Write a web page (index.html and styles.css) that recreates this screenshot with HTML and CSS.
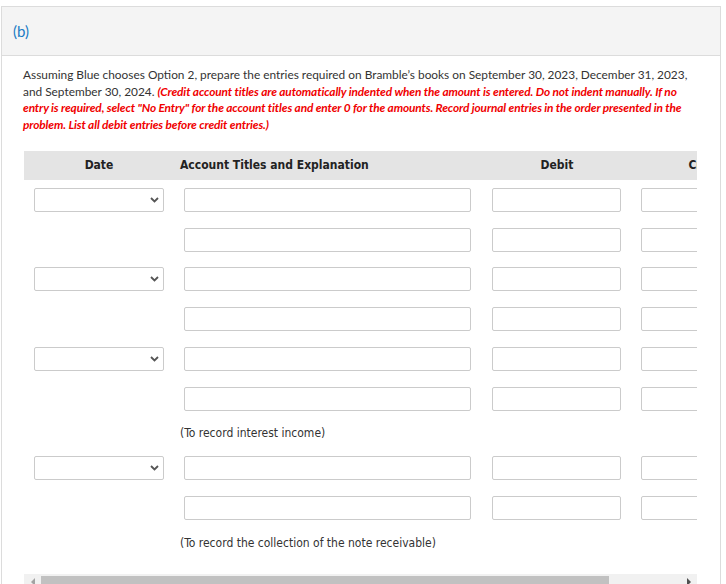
FILE: index.html
```html
<!DOCTYPE html>
<html>
<head>
<meta charset="utf-8">
<link rel="stylesheet" href="styles.css">
</head>
<body>
<div class="panel">
  <div class="panel-head"><span class="part">(b)</span></div>
  <div class="panel-body">
    <p class="prompt">Assuming Blue chooses Option 2, prepare the entries required on Bramble’s books on September 30, 2023, December 31, 2023, and September 30, 2024. <em class="warn">(Credit account titles are automatically indented when the amount is entered. Do not indent manually. If no entry is required, select "No Entry" for the account titles and enter 0 for the amounts. Record journal entries in the order presented in the problem. List all debit entries before credit entries.)</em></p>
    <div class="journal">
      <div class="journal-clip">
        <div class="jgrid">
          <div class="jhead c-date">Date</div>
          <div class="jhead c-acct">Account Titles and Explanation</div>
          <div class="jhead c-amt">Debit</div>
          <div class="jhead c-amt">Credit</div>

          <div class="cell c-date"><div class="sel"><svg class="chev" width="9" height="6" viewBox="0 0 9 6"><path d="M1 1l3.5 3.5L8 1" fill="none" stroke="#555" stroke-width="1.8"/></svg></div></div>
          <div class="cell c-acct-in"><div class="inp"></div></div>
          <div class="cell c-amt-in"><div class="inp"></div></div>
          <div class="cell c-cr-in"><div class="inp"></div></div>

          <div class="cell c-date"></div>
          <div class="cell c-acct-in"><div class="inp"></div></div>
          <div class="cell c-amt-in"><div class="inp"></div></div>
          <div class="cell c-cr-in"><div class="inp"></div></div>

          <div class="cell c-date"><div class="sel"><svg class="chev" width="9" height="6" viewBox="0 0 9 6"><path d="M1 1l3.5 3.5L8 1" fill="none" stroke="#555" stroke-width="1.8"/></svg></div></div>
          <div class="cell c-acct-in"><div class="inp"></div></div>
          <div class="cell c-amt-in"><div class="inp"></div></div>
          <div class="cell c-cr-in"><div class="inp"></div></div>

          <div class="cell c-date"></div>
          <div class="cell c-acct-in"><div class="inp"></div></div>
          <div class="cell c-amt-in"><div class="inp"></div></div>
          <div class="cell c-cr-in"><div class="inp"></div></div>

          <div class="cell c-date"><div class="sel"><svg class="chev" width="9" height="6" viewBox="0 0 9 6"><path d="M1 1l3.5 3.5L8 1" fill="none" stroke="#555" stroke-width="1.8"/></svg></div></div>
          <div class="cell c-acct-in"><div class="inp"></div></div>
          <div class="cell c-amt-in"><div class="inp"></div></div>
          <div class="cell c-cr-in"><div class="inp"></div></div>

          <div class="cell c-date"></div>
          <div class="cell c-acct-in"><div class="inp"></div></div>
          <div class="cell c-amt-in"><div class="inp"></div></div>
          <div class="cell c-cr-in"><div class="inp"></div></div>

          <div class="note-gap"></div>
          <div class="note">(To record interest income)</div>

          <div class="cell c-date"><div class="sel"><svg class="chev" width="9" height="6" viewBox="0 0 9 6"><path d="M1 1l3.5 3.5L8 1" fill="none" stroke="#555" stroke-width="1.8"/></svg></div></div>
          <div class="cell c-acct-in"><div class="inp"></div></div>
          <div class="cell c-amt-in"><div class="inp"></div></div>
          <div class="cell c-cr-in"><div class="inp"></div></div>

          <div class="cell c-date"></div>
          <div class="cell c-acct-in"><div class="inp"></div></div>
          <div class="cell c-amt-in"><div class="inp"></div></div>
          <div class="cell c-cr-in"><div class="inp"></div></div>

          <div class="note-gap"></div>
          <div class="note">(To record the collection of the note receivable)</div>
        </div>
      </div>
      <div class="hscroll">
        <div class="sb-btn"><span class="tri-left"></span></div>
        <div class="sb-track"><div class="sb-thumb"></div></div>
        <div class="sb-btn"><span class="tri-right"></span></div>
      </div>
    </div>
  </div>
</div>
</body>
</html>
```

FILE: styles.css
```css
html, body {
  margin: 0;
  padding: 0;
  background: #fff;
}
body {
  width: 726px;
  height: 584px;
  overflow: hidden;
}
.panel {
  margin: 6px 0 0 1px;
  width: 718px;
  border: 1px solid #dcdcdc;
  border-bottom: none;
  height: 600px;
}
.panel-head {
  height: 48px;
  background: #f4f4f4;
  border-bottom: 1px solid #dcdcdc;
  display: flex;
  align-items: center;
  padding-left: 11px;
}
.part {
  font-family: Lato, "Liberation Sans", sans-serif;
  font-size: 15px;
  color: #1b7cc5;
  font-weight: 400;
}
.panel-body {
  padding: 11px 22px 0 21px;
}
.prompt {
  margin: 0;
  font-family: Lato, "Liberation Sans", sans-serif;
  font-size: 11.86px;
  line-height: 16.7px;
  color: #333;
}
.warn {
  color: #f00000;
  font-weight: 700;
  font-style: italic;
  letter-spacing: -0.12px;
}
.journal {
  margin: 17px 0 0 1px;
  width: 673px;
}
.journal-clip {
  overflow: hidden;
  width: 673px;
}
.jgrid {
  display: grid;
  grid-template-columns: 150px 308px 150px 150px;
  width: 758px;
  font-family: "DejaVu Sans Condensed", "DejaVu Sans", sans-serif;
  color: #222;
}
.jhead {
  background: #e4e4e4;
  height: 29px;
  display: flex;
  align-items: center;
  font-weight: 700;
  font-size: 12px;
}
.jhead.c-date, .jhead.c-amt {
  justify-content: center;
}
.jhead.c-acct {
  padding-left: 6px;
}
.cell {
  height: 39.75px;
  box-sizing: border-box;
  padding-top: 8px;
}
.c-date { padding-left: 10px; padding-right: 10px; }
.c-acct-in { padding-left: 10px; padding-right: 11px; }
.c-amt-in { padding-left: 10px; padding-right: 11px; }
.c-cr-in { padding-left: 9px; padding-right: 11px; }
.inp, .sel {
  height: 24px;
  box-sizing: border-box;
  border: 1px solid #cbcbcb;
  border-radius: 2px;
  background: #fff;
}
.sel {
  display: flex;
  align-items: center;
  justify-content: flex-end;
  padding-right: 4px;
}
.note-gap {
  height: 30px;
}
.note {
  grid-column: 2 / 5;
  height: 30px;
  display: flex;
  align-items: center;
  padding-left: 6px;
  font-size: 12px;
  color: #333;
}
.hscroll {
  margin-top: 16px;
  height: 17px;
  background: #f1f1f1;
  display: flex;
}
.sb-btn {
  width: 17px;
  display: flex;
  align-items: center;
  justify-content: center;
}
.sb-track {
  flex: 1;
  padding: 2px 71px 2px 0;
}
.sb-thumb {
  height: 100%;
  background: #c1c1c1;
}
.tri-left {
  width: 0;
  height: 0;
  border-top: 4px solid transparent;
  border-bottom: 4px solid transparent;
  border-right: 4px solid #a3a3a3;
}
.tri-right {
  width: 0;
  height: 0;
  border-top: 4px solid transparent;
  border-bottom: 4px solid transparent;
  border-left: 4px solid #505050;
}
```
